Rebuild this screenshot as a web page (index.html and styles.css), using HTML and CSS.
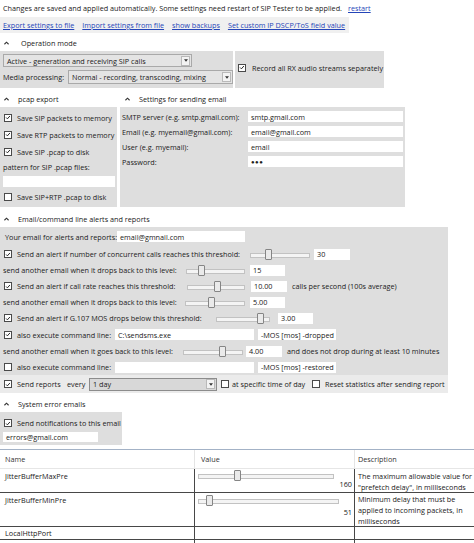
FILE: index.html
```html
<!DOCTYPE html>
<html>
<head>
<meta charset="utf-8">
<title>SIP Tester settings</title>
<link rel="stylesheet" href="styles.css">
</head>
<body>
<div class="notice">Changes are saved and applied automatically. Some settings need restart of SIP Tester to be applied.<a class="lnk restart">restart</a></div>
<div class="links"><a class="lnk">Export settings to file</a><a class="lnk">Import settings from file</a><a class="lnk">show backups</a><a class="lnk">Set custom IP DSCP/ToS field value</a></div>

<div class="sechead op-head"><svg class="caret" viewBox="0 0 6 4"><polyline points="0.5,3.5 3,1 5.5,3.5"/></svg>Operation mode</div>
<div class="oprow">
  <div class="panel op-left">
    <div class="dd dd-mode"><span>Active - generation and receiving SIP calls</span><span class="arr"><svg viewBox="0 0 5 3"><polygon points="0,0 5,0 2.5,3"/></svg></span></div>
    <div class="mp-row"><span class="mp-lab">Media processing:</span><div class="dd dd-media"><span>Normal - recording, transcoding, mixing</span><span class="arr"><svg viewBox="0 0 5 3"><polygon points="0,0 5,0 2.5,3"/></svg></span></div></div>
  </div>
  <div class="panel op-right">
    <span class="cb on"><svg viewBox="0 0 8 8"><polyline points="1.5,4 3.2,5.8 6.5,2"/></svg></span><span>Record all RX audio streams separately</span>
  </div>
</div>

<div class="twocol">
  <div class="col pcap-col">
    <div class="sechead"><svg class="caret" viewBox="0 0 6 4"><polyline points="0.5,3.5 3,1 5.5,3.5"/></svg>pcap export</div>
    <div class="panel pcap">
      <div class="prow"><span class="cb on"><svg viewBox="0 0 8 8"><polyline points="1.5,4 3.2,5.8 6.5,2"/></svg></span>Save SIP packets to memory</div>
      <div class="prow"><span class="cb on"><svg viewBox="0 0 8 8"><polyline points="1.5,4 3.2,5.8 6.5,2"/></svg></span>Save RTP packets to memory</div>
      <div class="prow"><span class="cb on"><svg viewBox="0 0 8 8"><polyline points="1.5,4 3.2,5.8 6.5,2"/></svg></span>Save SIP .pcap to disk</div>
      <div class="plab">pattern for SIP .pcap files:</div>
      <div class="tb pcap-tb"></div>
      <div class="prow last"><span class="cb"></span>Save SIP+RTP .pcap to disk</div>
    </div>
  </div>
  <div class="col mail-col">
    <div class="sechead mail-head"><svg class="caret" viewBox="0 0 6 4"><polyline points="0.5,3.5 3,1 5.5,3.5"/></svg>Settings for sending email</div>
    <div class="panel mail">
      <div class="mrow"><span class="mlab">SMTP server (e.g. smtp.gmail.com):</span><span class="tb mtb">smtp.gmail.com</span></div>
      <div class="mrow"><span class="mlab">Email (e.g. myemail@gmail.com):</span><span class="tb mtb">email@gmail.com</span></div>
      <div class="mrow"><span class="mlab">User (e.g. myemail):</span><span class="tb mtb">email</span></div>
      <div class="mrow"><span class="mlab">Password:</span><span class="tb mtb pw">●●●</span></div>
    </div>
  </div>
</div>

<div class="sechead alert-head"><svg class="caret" viewBox="0 0 6 4"><polyline points="0.5,3.5 3,1 5.5,3.5"/></svg>Email/command line alerts and reports</div>
<div class="panel alerts">
  <div class="arow first"><span class="lab l-mail">Your email for alerts and reports:</span><span class="tb t-mail">email@gmnail.com</span></div>
  <div class="arow"><span class="cb on"><svg viewBox="0 0 8 8"><polyline points="1.5,4 3.2,5.8 6.5,2"/></svg></span><span class="lab l-conc">Send an alert if number of concurrent calls reaches this threshold:</span><span class="slider s60"><span class="thumb" style="left:30%"></span></span><span class="tb t36 g4">30</span></div>
  <div class="arow"><span class="lab l-back1">send another email when it drops back to this level:</span><span class="slider s59"><span class="thumb" style="left:25%"></span></span><span class="tb t35 g5">15</span></div>
  <div class="arow"><span class="cb on"><svg viewBox="0 0 8 8"><polyline points="1.5,4 3.2,5.8 6.5,2"/></svg></span><span class="lab l-rate">Send an alert if call rate reaches this threshold:</span><span class="slider s58"><span class="thumb" style="left:52%"></span></span><span class="tb t36 g6">10.00</span><span class="after">calls per second (100s average)</span></div>
  <div class="arow"><span class="lab l-back2">send another email when it drops back to this level:</span><span class="slider s60"><span class="thumb" style="left:43%"></span></span><span class="tb t35 g5">5.00</span></div>
  <div class="arow"><span class="cb on"><svg viewBox="0 0 8 8"><polyline points="1.5,4 3.2,5.8 6.5,2"/></svg></span><span class="lab l-mos">Send an alert if G.107 MOS drops below this threshold:</span><span class="slider s54"><span class="thumb" style="left:81%"></span></span><span class="tb t35 g8">3.00</span></div>
  <div class="arow"><span class="cb on"><svg viewBox="0 0 8 8"><polyline points="1.5,4 3.2,5.8 6.5,2"/></svg></span><span class="lab l-cmd">also execute command line:</span><span class="tb t-cmd">C:\sendsms.exe</span><span class="tb t-args">-MOS [mos] -dropped</span></div>
  <div class="arow"><span class="lab l-back3">send another email when it goes back to this level:</span><span class="slider s60"><span class="thumb" style="left:65%"></span></span><span class="tb t36 g3">4.00</span><span class="after">and does not drop during at least 10 minutes</span></div>
  <div class="arow"><span class="cb"></span><span class="lab l-cmd">also execute command line:</span><span class="tb t-cmd"></span><span class="tb t-args">-MOS [mos] -restored</span></div>
  <div class="arow reports"><span class="cb on"><svg viewBox="0 0 8 8"><polyline points="1.5,4 3.2,5.8 6.5,2"/></svg></span><span class="lab l-rep">Send reports</span><span class="lab l-every">every</span><div class="dd dd-day"><span>1 day</span><span class="arr"><svg viewBox="0 0 5 3"><polygon points="0,0 5,0 2.5,3"/></svg></span></div><span class="cb cb-time"></span><span class="lab l-time">at specific time of day</span><span class="cb cb-reset"></span><span>Reset statistics after sending report</span></div>
</div>

<div class="sechead sys-head"><svg class="caret" viewBox="0 0 6 4"><polyline points="0.5,3.5 3,1 5.5,3.5"/></svg>System error emails</div>
<div class="panel sys">
  <div class="srow"><span class="cb on"><svg viewBox="0 0 8 8"><polyline points="1.5,4 3.2,5.8 6.5,2"/></svg></span>Send notifications to this email</div>
  <div class="tb sys-tb">errors@gmail.com</div>
</div>

<div class="grid">
  <div class="hd hn">Name</div><div class="hd hv">Value</div><div class="hd hdsc">Description</div>
  <div class="c cn r1">JitterBufferMaxPre</div>
  <div class="c cv r1"><span class="slider tsl1"><span class="thumb" style="left:29%"></span></span><span class="num">160</span></div>
  <div class="c cd r1">The maximum allowable value for "prefetch delay", in milliseconds</div>
  <div class="c cn r2">JitterBufferMinPre</div>
  <div class="c cv r2"><span class="slider tsl2"><span class="thumb" style="left:8%"></span></span><span class="num">51</span></div>
  <div class="c cd r2">Minimum delay that must be applied to incoming packets, in milliseconds</div>
  <div class="c cn r3">LocalHttpPort</div><div class="c cv r3"></div><div class="c cd r3"></div>
  <div class="c cn r4"></div><div class="c cv r4"></div><div class="c cd r4"></div>
</div>
</body>
</html>
```

FILE: styles.css
```css
* { box-sizing: border-box; }
html, body { margin: 0; padding: 0; }
body {
  width: 474px;
  height: 543px;
  overflow: hidden;
  background: #fff;
  font-family: "Open Sans", "Noto Sans", sans-serif;
  font-size: 7.25px;
  color: #202020;
  white-space: nowrap;
}
.lnk { color: #2545b8; text-decoration: underline; cursor: pointer; }

.notice { height: 16px; display: flex; align-items: center; padding-left: 3px; }
.notice .restart { margin-left: 6px; }
.links {
  width: 349px; height: 16px; margin-top: 1px;
  background: #f0f0f0;
  display: flex; align-items: center; gap: 8px; padding-left: 3px;
}

.sechead { height: 17px; display: flex; align-items: center; padding-left: 4px; }
.caret { width: 5px; height: 4px; margin-right: 9px; flex: none; }
.caret polyline { fill: none; stroke: #333; stroke-width: 1.3; }
.op-head { height: 18px; padding-top: 2px; }
.op-head .caret { margin-right: 12px; }

.panel { background: #dedede; }

/* operation mode */
.oprow { display: flex; gap: 2px; height: 37px; }
.op-left { width: 233px; padding: 3px 0 0 3px; display: flex; flex-direction: column; gap: 3px; }
.op-right { width: 149px; display: flex; align-items: center; padding: 0 0 4px 3px; }
.op-right .cb { margin-right: 6px; }
.dd {
  height: 13px; border: 1px solid #a9a9a9; background: #e4e4e4;
  display: flex; align-items: center; justify-content: space-between; padding-left: 3px;
}
.dd .arr {
  width: 9px; height: 10px; margin-right: 1px; background: #f3f3f3; border: 1px solid #b9b9b9;
  display: flex; align-items: center; justify-content: center;
}
.dd .arr svg { width: 4px; height: 3px; fill: #333; }
.dd-mode { width: 189px; }
.mp-row { display: flex; align-items: center; }
.mp-lab { width: 65px; }
.dd-media { width: 165px; height: 14px; }

/* pcap / email */
.twocol { display: flex; gap: 3px; margin-top: 2px; }
.pcap-col { width: 117px; }
.mail-col { width: 285px; }
.mail-head { padding-left: 5px; }
.pcap { height: 100px; padding-top: 2px; }
.prow { height: 17px; display: flex; align-items: center; padding-left: 4px; }
.prow .cb { margin-right: 5px; }
.prow.last { height: 20px; }
.plab { height: 14px; display: flex; align-items: center; padding-left: 3px; }
.pcap-tb { width: 112px; margin: 2px 0 0 3px; }
.mail { height: 100px; padding: 2px 0 0 2px; }
.mrow { height: 15px; display: flex; align-items: center; }
.mlab { width: 126px; }
.mtb { width: 155px; }
.pw { font-size: 6px; letter-spacing: 0.5px; }

/* common controls */
.cb {
  width: 8px; height: 8px; flex: none; background: #fff; border: 1px solid #4a4a4a;
  display: inline-flex; align-items: center; justify-content: center;
}
.cb svg { width: 7px; height: 7px; }
.cb polyline { fill: none; stroke: #222; stroke-width: 1.3; }
.tb { background: #fff; height: 11px; display: flex; align-items: center; padding-left: 3px; flex: none; }

.slider { position: relative; height: 11px; flex: none; display: block; }
.slider::before {
  content: ""; position: absolute; left: 0; right: 0; top: 4px; height: 3px;
  background: #f4f4f4; border: 1px solid #c2c2c2;
}
.thumb {
  position: absolute; top: 0; width: 7px; height: 11px; margin-left: -3px;
  background: #eaeaea; border: 1px solid #858585; border-radius: 1px;
}
.s60 { width: 60px; }
.s59 { width: 59px; }
.s58 { width: 58px; }
.s54 { width: 54px; }

/* alerts */
.alert-head { margin-top: 2px; height: 18px; padding-top: 1px; }
.alerts { width: 448px; }
.arow { height: 16px; display: flex; align-items: center; padding-left: 3px; }
.arow.first { height: 19px; padding-left: 5px; }
.arow .cb { margin-left: 1px; margin-right: 5px; }
.lab { flex: none; }
.l-mail { width: 112px; }
.t-mail { width: 128px; }
.l-conc { width: 233px; }
.l-back1 { width: 183px; }
.l-rate { width: 170px; }
.l-back2 { width: 182px; }
.l-mos { width: 199px; }
.l-cmd { width: 98px; }
.l-back3 { width: 180px; }
.t36 { width: 36px; }
.t35 { width: 35px; }
.g3 { margin-left: 3px; }
.g4 { margin-left: 4px; }
.g5 { margin-left: 5px; }
.g6 { margin-left: 6px; }
.g8 { margin-left: 8px; }
.after { margin-left: 5px; }
.t-cmd { width: 139px; }
.t-args { width: 78px; margin-left: 4px; }
.arow:nth-child(7) { height: 17px; }
.reports { height: 18px; background: #ebebeb; }
.l-rep { width: 50px; }
.l-every { width: 22px; }
.dd-day { width: 128px; background: #d8d8d8; border-color: #8c8c8c; }
.reports .cb-time { margin-left: 4px; margin-right: 3px; }
.l-time { width: 80px; }
.reports .cb-reset { margin-left: 0; margin-right: 5px; }

/* system */
.sys-head { margin-top: 2px; height: 17px; padding-top: 1px; }
.sys { width: 122px; height: 33px; padding-top: 2px; }
.srow { height: 18px; display: flex; align-items: center; padding-left: 4px; }
.srow .cb { margin-right: 5px; }
.sys-tb { width: 95px; height: 10px; margin-left: 3px; }

/* grid */
.grid {
  margin-top: 4px;
  border-top: 1px solid #a3b2c6;
  display: grid;
  grid-template-columns: 194px 160px 120px;
  grid-template-rows: 19px 24px 34px 13px 20px;
}
.hd { display: flex; align-items: center; border-bottom: 1px solid #e6e6e6; color: #333; }
.hn { padding-left: 5px; }
.hv { padding-left: 6px; border-left: 1px solid #e4e4e4; }
.hdsc { padding-left: 3px; border-left: 1px solid #e4e4e4; }
.c { border-bottom: 1px solid #474747; }
.cv, .cd { border-left: 1px solid #474747; }
.cn { padding: 2px 0 0 5px; }
.cd { white-space: normal; padding: 1px 0 0 3px; line-height: 11px; }
.cd.r1 { padding-top: 2px; }
.cv { display: flex; align-items: flex-start; padding: 1px 2px 0 3px; }
.cv .slider { flex: none; }
.tsl1 { width: 136px; }
.tsl2 { width: 141px; margin-top: 1px; }
.num { flex: 1; text-align: right; align-self: center; }
.cv.r1 .num { margin-top: 6px; }
.cv.r2 .num { margin-top: 3px; }
.cn.r3 { padding-top: 1px; }
```
